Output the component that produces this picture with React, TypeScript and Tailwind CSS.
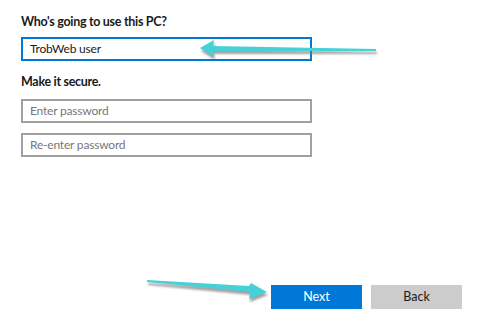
import React from "react";

const font = { fontFamily: 'Lato, "Open Sans", sans-serif' };

function Arrows() {
  return (
    <svg className="absolute left-0 top-0 pointer-events-none" width="487" height="320" viewBox="0 0 487 320">
      <defs>
        <filter id="sh" x="-10%" y="-50%" width="120%" height="200%">
          <feGaussianBlur stdDeviation="1.2" />
        </filter>
      </defs>
      {/* top arrow, pointing left at the name box */}
      <polygon points="201,51 215,43 214,49 377,52 377,54 214,54 215,60" fill="#7a7a7a" opacity="0.7" filter="url(#sh)" />
      <polygon points="200,48 214,40 213,46 376,49 376,51 213,51 214,57" fill="#47d1d6" />
      {/* bottom arrow, pointing right at Next */}
      <polygon points="148,283 250,289 252,286 268,295 250,302 251,295 148,285" fill="#7a7a7a" opacity="0.7" filter="url(#sh)" />
      <polygon points="147,280 249,286 251,283 267,292 249,299 250,292 147,282" fill="#47d1d6" />
    </svg>
  );
}

export default function App() {
  return (
    <div className="relative w-[487px] h-[320px] bg-white flex flex-col text-black" style={font}>
      <div className="flex flex-col pl-[21px] pt-[14px]">
        <p className="text-[12.5px] leading-4 font-bold tracking-[-0.3px] text-[#1a1a1a]">Who's going to use this PC?</p>
        <div className="mt-[7px] w-[291px] h-[24px] border-2 border-[#0078d7] flex items-center px-[7px] text-[12px] tracking-[-0.2px] text-[#1a1a1a]">
          TrobWeb user
        </div>
        <p className="mt-[13px] text-[12.5px] leading-4 font-bold tracking-[-0.3px] text-[#1a1a1a]">Make it secure.</p>
        <div className="mt-[9px] w-[291px] h-[24px] border-2 border-[#a0a0a0] flex items-center px-[7px] text-[12px] tracking-[-0.2px] text-[#777]">
          Enter password
        </div>
        <div className="mt-[10px] w-[291px] h-[24px] border-2 border-[#a0a0a0] flex items-center px-[7px] text-[12px] tracking-[-0.2px] text-[#777]">
          Re-enter password
        </div>
      </div>
      <div className="mt-auto flex justify-end gap-[9px] pr-[25px] pb-[11px]">
        <button className="w-[91px] h-[24px] bg-[#0078d7] text-white text-[12.5px]">Next</button>
        <button className="w-[91px] h-[24px] bg-[#cccccc] text-[#1a1a1a] text-[12.5px]">Back</button>
      </div>
      <Arrows />
    </div>
  );
}
